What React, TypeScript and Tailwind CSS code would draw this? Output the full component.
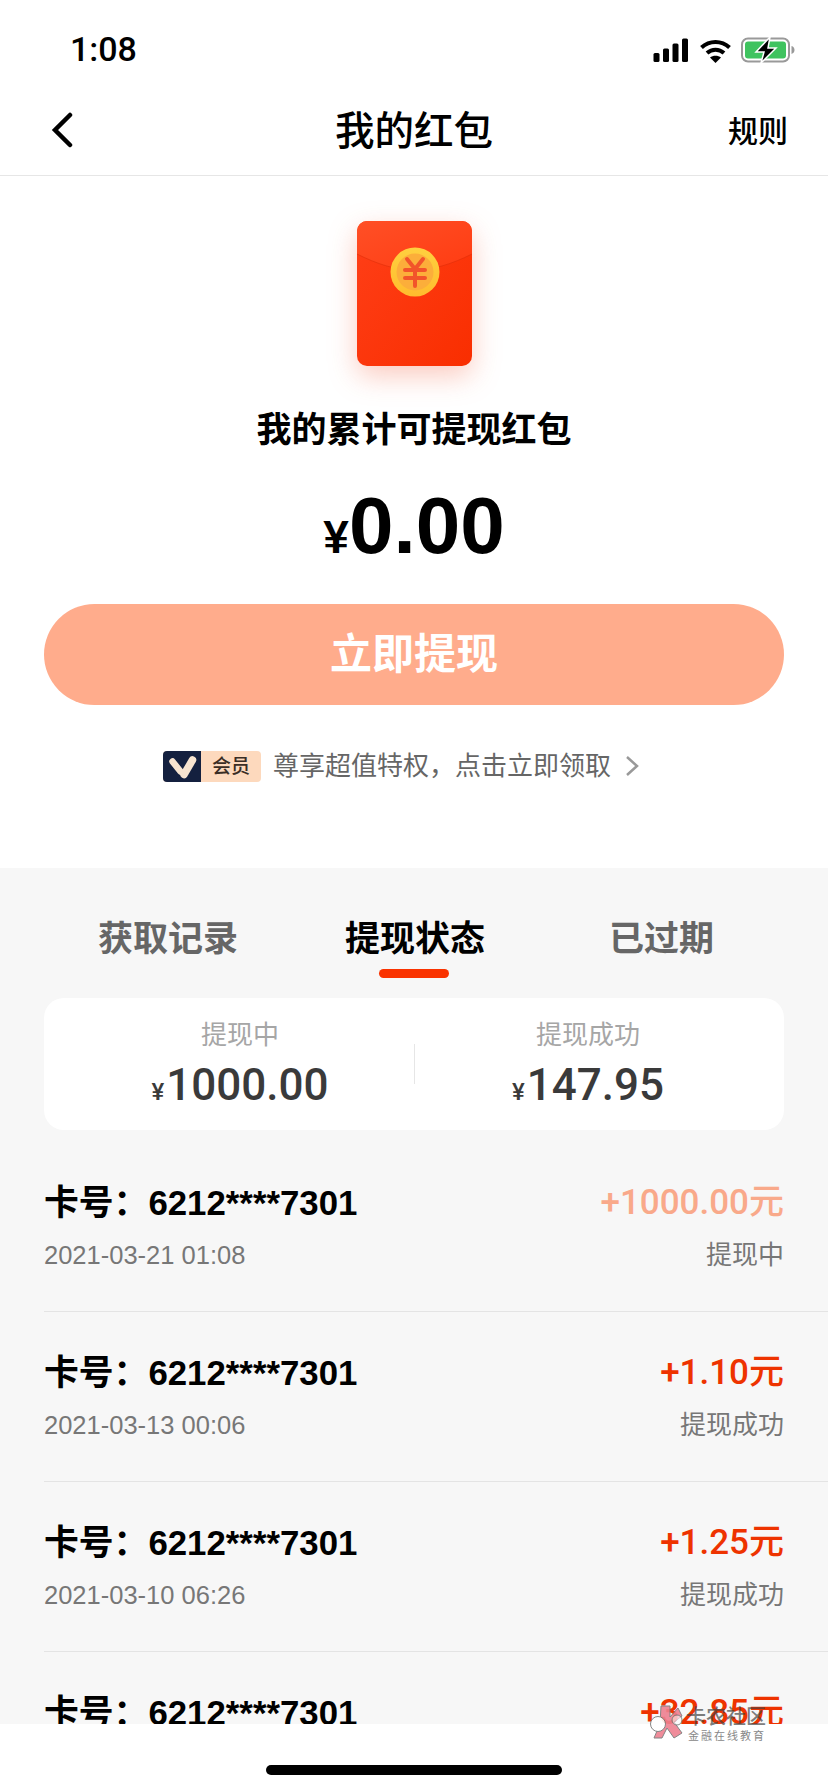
const font = "font-['Liberation_Sans','Noto_Sans_CJK_SC',sans-serif]";
const digits = "font-['Roboto','Noto_Sans_CJK_SC',sans-serif]";

const records = [
  { amount: "+1000.00元", date: "2021-03-21 01:08", status: "提现中", pending: true },
  { amount: "+1.10元", date: "2021-03-13 00:06", status: "提现成功", pending: false },
  { amount: "+1.25元", date: "2021-03-10 06:26", status: "提现成功", pending: false },
  { amount: "+32.85元", date: "2021-03-08 12:41", status: "提现成功", pending: false },
];

function StatusIcons() {
  return (
    <div className="mt-[7px] flex items-center">
      <svg width="36" height="24" viewBox="0 0 36 24" fill="#000">
        <rect x="0.500" y="15" width="6" height="9" rx="1.500" />
        <rect x="10" y="10.500" width="6" height="13.500" rx="1.500" />
        <rect x="19.500" y="5.500" width="6" height="18.500" rx="1.500" />
        <rect x="29" y="0.500" width="6" height="23.500" rx="1.500" />
      </svg>
      <svg width="33" height="25" viewBox="0 0 32 25" fill="none" stroke="#000" strokeWidth="4" className="ml-[10px]">
        <path d="M2 9.500C10 2 22 2 30 9.500" />
        <path d="M7.500 15c5-4.500 12-4.500 17 0" />
        <path d="M16 25l-5.500-5.500c3-2.500 8-2.500 11 0z" fill="#000" stroke="none" />
      </svg>
      <svg width="54" height="26" viewBox="0 0 54 26" fill="none" className="ml-[9px]">
        <rect x="1" y="1.500" width="47" height="23" rx="6" stroke="#999" strokeWidth="2" />
        <rect x="4" y="4.500" width="41" height="17" rx="3" fill="#3fc35f" />
        <path d="M50.500 9c2 .6 3 2.200 3 4s-1 3.400-3 4z" fill="#999" />
        <path d="M29 0L15 15h8l-3 11 15-15h-8z" fill="#000" stroke="#fff" strokeWidth="1.500" />
      </svg>
    </div>
  );
}

function RedPacket() {
  return (
    <div className="flex justify-center pt-[45px]">
      <svg width="115" height="145" viewBox="0 0 115 145" className="overflow-visible drop-shadow-[0_10px_14px_rgba(240,70,30,0.28)]">
        <defs>
          <linearGradient id="packet" x1="0" y1="0" x2="1" y2="1">
            <stop offset="0" stopColor="#ff3f18" />
            <stop offset="1" stopColor="#f92e00" />
          </linearGradient>
          <linearGradient id="flap" x1="0" y1="0" x2="1" y2="1">
            <stop offset="0" stopColor="#ff4f26" />
            <stop offset="1" stopColor="#ff3c12" />
          </linearGradient>
          <linearGradient id="coin" x1="0" y1="0" x2="0" y2="1">
            <stop offset="0" stopColor="#ffd03f" />
            <stop offset="1" stopColor="#ffbc2e" />
          </linearGradient>
        </defs>
        <rect width="115" height="145" rx="10" fill="url(#packet)" />
        <path d="M0 33c20 10 38 16 57 16s38-6 58-16V10a10 10 0 0 0-10-10H10A10 10 0 0 0 0 10z" fill="url(#flap)" />
        <path d="M0 33c20 10 38 16 57 16s38-6 58-16" fill="none" stroke="#dc2c08" strokeOpacity="0.55" />
        <circle cx="58" cy="51" r="24.500" fill="url(#coin)" />
        <circle cx="58" cy="51" r="18.500" fill="#fcae3a" />
        <path d="M50 38l8 10 8-10M48 49h20M48 57h20M58 48v17" fill="none" stroke="#f2542a" strokeWidth="4" strokeLinecap="round" />
      </svg>
    </div>
  );
}

function VipRow() {
  return (
    <div className="mt-[45px] flex items-center pl-[163px]">
      <div className="flex h-[31px] w-[98px] overflow-hidden rounded-[4px] bg-[#fdd9bd]">
        <div className="flex w-[38px] items-center justify-center bg-[#14203f]">
          <svg width="38" height="31" viewBox="0 0 38 31" fill="none" strokeLinecap="round">
            <path d="M9.500 10.500l8 10" stroke="#f7e4d0" strokeWidth="6.500" />
            <path d="M21 23.500L29.500 9" stroke="#f7e4d0" strokeWidth="7.500" />
          </svg>
        </div>
        <div className="flex-1 text-center text-[19px] font-medium leading-[31px] text-[#3a2d25]">会员</div>
      </div>
      <div className="ml-[12px] text-[26px] leading-[32px] text-[#666]">尊享超值特权，点击立即领取</div>
      <svg width="16" height="24" viewBox="0 0 16 24" fill="none" stroke="#999" strokeWidth="2.500" className="ml-[13px]">
        <path d="M3 3l10 9-10 9" />
      </svg>
    </div>
  );
}

function Tabs() {
  return (
    <div className="relative flex h-[118px] items-start pl-[98px] pt-[51px] text-[35px] font-semibold leading-[40px] text-[#666]">
      <div className="w-[247px]">获取记录</div>
      <div className="relative w-[264px] text-black">
        提现状态
        <div className="absolute left-[34px] top-[50px] h-[9px] w-[70px] rounded-full bg-[#fa3300]" />
      </div>
      <div>已过期</div>
    </div>
  );
}

function Summary() {
  const cols = [
    { label: "提现中", value: "1000.00", pad: "pl-[22px]" },
    { label: "提现成功", value: "147.95", pad: "pr-[22px]" },
  ];
  return (
    <div className="relative mx-[44px] flex h-[132px] rounded-[20px] bg-white">
      {cols.map((c) => (
        <div key={c.label} className={`flex-1 pt-[21px] text-center ${c.pad}`}>
          <div className="text-[26px] leading-[32px] text-[#a6a6a6]">{c.label}</div>
          <div className={`mt-[10px] text-[44px] font-medium leading-[48px] text-[#3a3a3a] ${digits}`}>
            <span className="mr-[2px] text-[24px]">¥</span>
            {c.value}
          </div>
        </div>
      ))}
      <div className="absolute left-[370px] top-[46px] h-[40px] w-px bg-[#e6e6e6]" />
    </div>
  );
}

function RecordRow({ amount, date, status, pending }: (typeof records)[number]) {
  return (
    <div className="ml-[44px] flex h-[170px] justify-between border-b border-[#e4e4e4] pr-[44px] pt-[40px]">
      <div>
        <div className="text-[34.800px] font-bold leading-[42px] text-black">卡号：6212****7301</div>
        <div className="mt-[15px] text-[25.500px] leading-[32px] text-[#777]">{date}</div>
      </div>
      <div className="text-right">
        <div className={`text-[35px] font-medium leading-[42px] ${digits} ${pending ? "text-[#f9a98a]" : "text-[#ee3300]"}`}>{amount}</div>
        <div className="mt-[15px] text-[26px] leading-[32px] text-[#777]">{status}</div>
      </div>
    </div>
  );
}

export default function App() {
  return (
    <div className={`relative flex h-[1792px] w-[828px] flex-col overflow-hidden bg-white ${font}`}>
      <div className="flex h-[88px] items-start justify-between pl-[70px] pr-[33px] pt-[30px]">
        <div className={`text-[34px] font-medium leading-[38px] text-black ${digits}`}>1:08</div>
        <StatusIcons />
      </div>

      <div className="relative flex h-[88px] items-center justify-center border-b border-[#e6e6e6]">
        <svg width="24" height="36" viewBox="0 0 24 36" fill="none" stroke="#000" strokeWidth="4.500" strokeLinecap="round" className="absolute left-[50px] top-[24px]">
          <path d="M20 3L5 18l15 15" />
        </svg>
        <div className="-mt-[2px] text-[39.500px] font-medium leading-[46px] text-black">我的红包</div>
        <div className="absolute right-[40px] top-[26px] text-[30px] font-medium leading-[36px] text-black">规则</div>
      </div>

      <div className="h-[692px] shrink-0">
        <RedPacket />
        <div className="mt-[43px] text-center text-[35px] font-semibold leading-[42px] text-black">我的累计可提现红包</div>
        <div className="mt-[30px] text-center text-[80px] font-bold leading-[90px] text-black">
          <span className="text-[46px]">¥</span>0.00
        </div>
        <div className="mx-[44px] mt-[22px] flex h-[101px] items-center justify-center rounded-full bg-[#ffac8c] text-[42px] font-semibold text-white">立即提现</div>
        <VipRow />
      </div>

      <div className="relative min-h-0 flex-1 overflow-hidden bg-[#f7f7f7]">
        <Tabs />
        <div className="mt-[12px]" />
        <Summary />
        <div className="mt-[12px]">
          {records.map((r) => (
            <RecordRow key={r.date} {...r} />
          ))}
        </div>
      </div>

      <div className="flex h-[68px] shrink-0 items-start justify-center bg-white pt-[41px]">
        <div className="h-[10px] w-[296px] rounded-full bg-black" />
      </div>

      {/* watermark over the bottom edge */}
      <div className="absolute left-[649px] top-[1703px] flex items-start">
        <svg width="36" height="37" viewBox="0 0 36 37" fill="none" stroke="#777" strokeWidth="1" className="opacity-90">
          <path d="M12 3h9v11l8-9 4 8-8 6 8 11-8 5-7-10-5 10h-8l6-14z" fill="#ee8090" />
          <circle cx="9" cy="21" r="7.500" fill="#fff" />
          <circle cx="28" cy="17" r="5" fill="#fff" fillOpacity="0.6" />
        </svg>
        <div className="ml-[1px] mt-[4px]">
          <div className="text-[20px] font-medium leading-[21px] text-[#444]/70">卡农社区</div>
          <div className="ml-[2px] mt-[1px] text-[11px] leading-[14px] tracking-[2px] text-[#888]">金融在线教育</div>
        </div>
      </div>
    </div>
  );
}
